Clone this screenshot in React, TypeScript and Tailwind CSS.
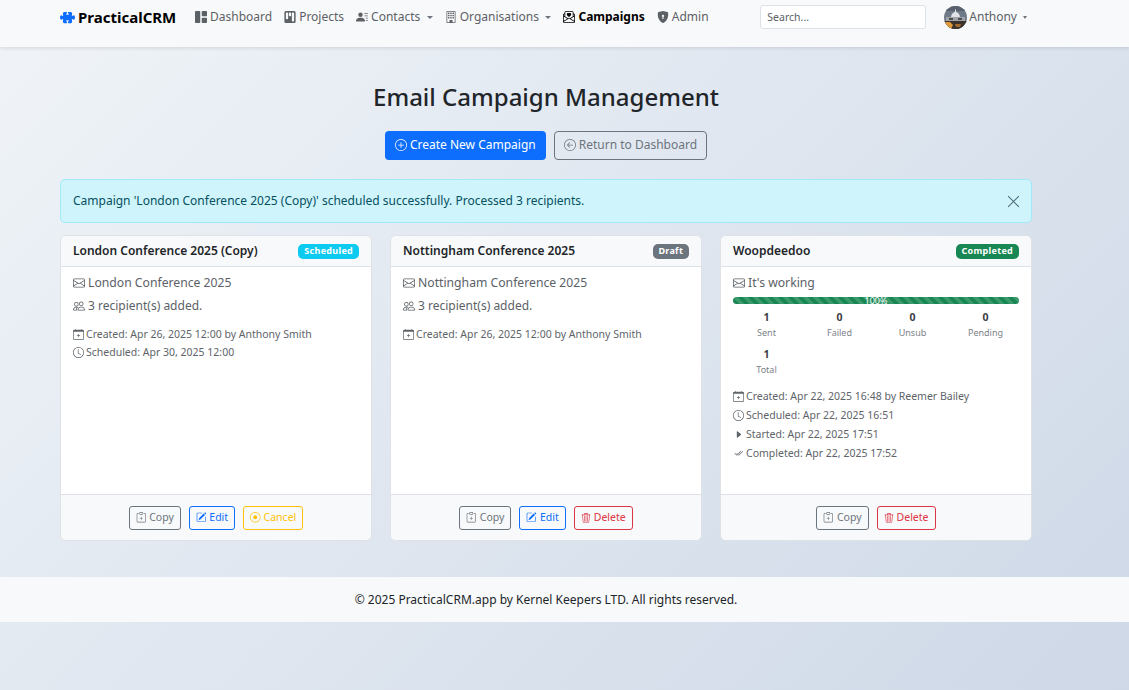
import React from "react";
import {
  BsPuzzleFill, BsGrid1X2Fill, BsKanbanFill, BsPersonLinesFill, BsBuilding, BsEnvelopePaperHeart, BsShieldLockFill,
  BsPlusCircle, BsArrowLeftCircle, BsEnvelope, BsPeople, BsCalendarPlus, BsClock, BsCaretRightFill, BsCheck2All,
  BsClipboardPlus, BsPencilSquare, BsRecordCircle, BsTrash3, BsXLg,
} from "react-icons/bs";

const Caret = () => (
  <span className="ml-[3.5px] inline-block w-0 h-0 border-x-[3.4px] border-x-transparent border-t-[3.4px] border-t-[#6c757d]" />
);

function NavItem({ icon, label, caret, active }: { icon: React.ReactNode; label: string; caret?: boolean; active?: boolean }) {
  return (
    <div className={`flex items-center gap-[3px] text-[12px] leading-[18px] ${active ? "font-bold text-black" : "text-[#5c6166]"}`}>
      <span className="text-[12px] flex">{icon}</span>
      <span>{label}</span>
      {caret && <Caret />}
    </div>
  );
}

const Avatar = () => (
  <svg width="23" height="23" viewBox="0 0 23 23" className="rounded-full">
    <rect width="23" height="23" fill="#6f7a88" />
    <rect width="23" height="5" fill="#58616d" />
    <path d="M7 12c0-3.500 2-6 4.500-6s4.500 2.500 4.500 6z" fill="#dfe3e7" />
    <rect x="11" y="3.500" width="1" height="3" fill="#dfe3e7" />
    <rect x="2" y="11" width="19" height="4" fill="#a0a4a8" />
    <rect x="5" y="12" width="4" height="2" fill="#4b4f55" />
    <rect x="14" y="12" width="4" height="2" fill="#4b4f55" />
    <rect y="15" width="23" height="8" fill="#3a322b" />
    <path d="M1 16h5l3 3-2 4H3z" fill="#e09a3a" />
    <path d="M11 18h6l-1 3h-4z" fill="#a06c30" />
  </svg>
);

function Btn({ tone, icon, label, narrow }: { tone: "gray" | "blue" | "yellow" | "red"; icon: React.ReactNode; label: string; narrow?: boolean }) {
  const cls = {
    gray: "border-[#6c757d] text-[#6c757d]",
    blue: "border-[#0d6efd] text-[#0d6efd]",
    yellow: "border-[#ffc107] text-[#ffc107]",
    red: "border-[#dc3545] text-[#dc3545]",
  }[tone];
  return (
    <div className={`h-[24px] px-[6px] flex items-center gap-[3px] border rounded-[3px] text-[10.5px] ${cls}`}>
      <span className={`flex ${narrow ? "text-[10px]" : "text-[10.5px]"}`}>{icon}</span>
      <span>{label}</span>
    </div>
  );
}

function Meta({ icon, text }: { icon: React.ReactNode; text: string }) {
  return (
    <div className="flex items-center gap-[2px] text-[10.5px] text-[#5e6469]">
      <span className="w-[11px] flex justify-center text-[11px]">{icon}</span>
      <span>{text}</span>
    </div>
  );
}

function Line({ icon, text, small }: { icon: React.ReactNode; text: string; small?: boolean }) {
  return (
    <div className={`flex items-center gap-[3px] leading-[18px] text-[#5b6167] ${small ? "text-[12px]" : "text-[12.2px]"}`}>
      <span className="flex text-[12px]">{icon}</span>
      <span>{text}</span>
    </div>
  );
}

function Card({ title, badge, badgeCls, children, actions }: { title: string; badge: string; badgeCls: string; children: React.ReactNode; actions: React.ReactNode }) {
  return (
    <div className="flex flex-col w-[312px] h-[306px] bg-white border border-[#dee2e6] rounded-[6px] overflow-hidden">
      <div className="h-[31px] shrink-0 flex items-center justify-between px-3 bg-[#f8f9fa] border-b border-[#dee2e6]">
        <span className="text-[12px] font-semibold text-[#212529]">{title}</span>
        <span className={`h-[15px] px-[5.9px] flex items-center rounded-[5px] text-[9px] font-bold tracking-[0.3px] text-white ${badgeCls}`}>{badge}</span>
      </div>
      <div className="flex-1 px-3 pt-[7px]">{children}</div>
      <div className="h-[46px] shrink-0 flex items-center justify-center gap-2 bg-[#f8f9fa] border-t border-[#dee2e6]">{actions}</div>
    </div>
  );
}

function Stat({ n, label }: { n: string; label: string }) {
  return (
    <div className="flex flex-col items-center">
      <span className="text-[10.5px] font-bold leading-[16px] text-[#3a3f44]">{n}</span>
      <span className="text-[9px] leading-[15px] text-[#7b8288]">{label}</span>
    </div>
  );
}

export default function App() {
  return (
    <div className="min-h-[690px] flex flex-col bg-[linear-gradient(135deg,#f0f4f8_0%,#ced8e7_100%)] font-['Noto_Sans',sans-serif]">
      <nav className="h-[47px] shrink-0 bg-[#f8f9fa] shadow-[0_1px_4px_rgba(0,0,0,0.12)]">
        <div className="w-[972px] ml-[60px] h-[34px] flex items-center">
          <div className="flex items-center gap-[3px] w-[135px] font-bold text-[15px] text-black">
            <BsPuzzleFill className="text-[#0d6efd] text-[15px]" />
            <span>PracticalCRM</span>
          </div>
          <div className="flex items-center gap-[12px]">
            <NavItem icon={<BsGrid1X2Fill />} label="Dashboard" />
            <NavItem icon={<BsKanbanFill />} label="Projects" />
            <NavItem icon={<BsPersonLinesFill />} label="Contacts" caret />
            <NavItem icon={<BsBuilding />} label="Organisations" caret />
            <NavItem icon={<BsEnvelopePaperHeart />} label="Campaigns" active />
            <NavItem icon={<BsShieldLockFill />} label="Admin" />
          </div>
          <div className="ml-auto flex items-center mr-[5px]">
            <input placeholder="Search..." className="w-[166px] h-[24px] px-[6px] bg-white border border-[#dee2e6] rounded-[3px] text-[10.5px] placeholder:text-[#5c6166] mr-[18px]" />
            <Avatar />
            <span className="ml-[2px] text-[12px] text-[#5c6166]">Anthony</span>
            <span className="ml-[6px] inline-block w-0 h-0 border-x-[2.75px] border-x-transparent border-t-[3px] border-t-[#6c757d]" />
          </div>
        </div>
      </nav>

      <main className="w-[972px] ml-[60px] flex flex-col">
        <h1 className="mt-[32px] text-center text-[24px] leading-[36px] font-medium text-[#212529]">Email Campaign Management</h1>
        <div className="mt-[16px] flex justify-center gap-2">
          <div className="h-[29px] px-[10px] pb-px flex items-center gap-[3px] rounded-[4px] bg-[#0d6efd] text-white text-[12px]">
            <BsPlusCircle className="text-[12px]" />
            <span>Create New Campaign</span>
          </div>
          <div className="h-[29px] px-[9px] pb-px flex items-center gap-[3px] rounded-[4px] border border-[#6c757d] text-[#6c757d] text-[12px]">
            <BsArrowLeftCircle className="text-[12px]" />
            <span>Return to Dashboard</span>
          </div>
        </div>
        <div className="mt-[19px] h-[44px] flex items-center justify-between pl-[12px] pr-[10px] rounded-[5px] border border-[#9eeaf9] bg-[#cff4fc] text-[#055160] text-[12px]">
          <span>Campaign 'London Conference 2025 (Copy)' scheduled successfully. Processed 3 recipients.</span>
          <BsXLg className="text-[15px] text-[#4d6a72]" />
        </div>

        <div className="mt-[12px] flex gap-[18px]">
          <Card
            title="London Conference 2025 (Copy)"
            badge="Scheduled"
            badgeCls="bg-[#0dcaf0]"
            actions={<>
              <Btn tone="gray" icon={<BsClipboardPlus />} label="Copy" />
              <Btn tone="blue" icon={<BsPencilSquare />} label="Edit" />
              <Btn tone="yellow" icon={<BsRecordCircle />} label="Cancel" />
            </>}
          >
            <Line icon={<BsEnvelope />} text="London Conference 2025" />
            <div className="mt-[5px]"><Line small icon={<BsPeople />} text="3 recipient(s) added." /></div>
            <div className="mt-[12px] flex flex-col gap-[2.25px]">
              <Meta icon={<BsCalendarPlus />} text="Created: Apr 26, 2025 12:00 by Anthony Smith" />
              <Meta icon={<BsClock />} text="Scheduled: Apr 30, 2025 12:00" />
            </div>
          </Card>

          <Card
            title="Nottingham Conference 2025"
            badge="Draft"
            badgeCls="bg-[#6c757d]"
            actions={<>
              <Btn tone="gray" icon={<BsClipboardPlus />} label="Copy" />
              <Btn tone="blue" icon={<BsPencilSquare />} label="Edit" />
              <Btn narrow tone="red" icon={<BsTrash3 />} label="Delete" />
            </>}
          >
            <Line icon={<BsEnvelope />} text="Nottingham Conference 2025" />
            <div className="mt-[5px]"><Line small icon={<BsPeople />} text="3 recipient(s) added." /></div>
            <div className="mt-[12px] flex flex-col gap-[2.25px]">
              <Meta icon={<BsCalendarPlus />} text="Created: Apr 26, 2025 12:00 by Anthony Smith" />
            </div>
          </Card>

          <Card
            title="Woopdeedoo"
            badge="Completed"
            badgeCls="bg-[#198754]"
            actions={<>
              <Btn tone="gray" icon={<BsClipboardPlus />} label="Copy" />
              <Btn narrow tone="red" icon={<BsTrash3 />} label="Delete" />
            </>}
          >
            <Line icon={<BsEnvelope />} text="It's working" />
            <div className="relative mt-[5px] h-[7px] rounded-[4px] bg-[#198754] bg-[linear-gradient(45deg,rgba(255,255,255,0.15)_25%,transparent_25%,transparent_50%,rgba(255,255,255,0.15)_50%,rgba(255,255,255,0.15)_75%,transparent_75%,transparent)] bg-[length:10px_10px]">
              <span className="absolute inset-0 flex items-center justify-center text-[9px] text-white">100%</span>
            </div>
            <div className="-mx-[3px] mt-[5px] grid grid-cols-4 gap-x-0 gap-y-[6px]">
              <Stat n="1" label="Sent" />
              <Stat n="0" label="Failed" />
              <Stat n="0" label="Unsub" />
              <Stat n="0" label="Pending" />
              <Stat n="1" label="Total" />
            </div>
            <div className="mt-[12px] flex flex-col gap-[3.25px]">
              <Meta icon={<BsCalendarPlus />} text="Created: Apr 22, 2025 16:48 by Reemer Bailey" />
              <Meta icon={<BsClock />} text="Scheduled: Apr 22, 2025 16:51" />
              <Meta icon={<BsCaretRightFill className="text-[9px] -ml-px" />} text="Started: Apr 22, 2025 17:51" />
              <Meta icon={<BsCheck2All className="text-[9px]" />} text="Completed: Apr 22, 2025 17:52" />
            </div>
          </Card>
        </div>
      </main>

      <footer className="mt-[36px] h-[45px] bg-[#f8f9fa] flex items-center">
        <div className="w-[972px] ml-[60px] text-center text-[12px] text-[#212529]">© 2025 PracticalCRM.app by Kernel Keepers LTD. All rights reserved.</div>
      </footer>
    </div>
  );
}
